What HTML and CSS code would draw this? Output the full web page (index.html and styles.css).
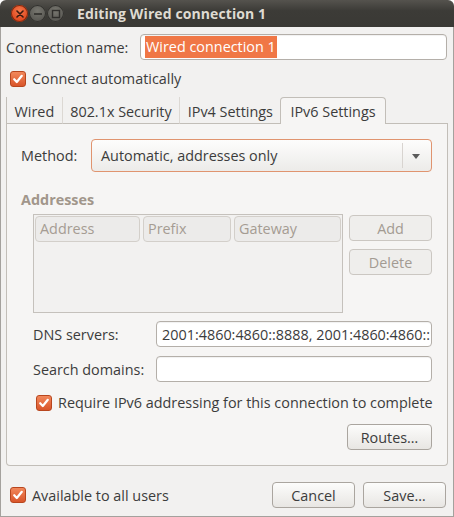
FILE: index.html
```html
<!DOCTYPE html>
<html>
<head>
<meta charset="utf-8">
<link rel="stylesheet" href="styles.css">
</head>
<body>
<div class="window">
  <div class="titlebar">
    <div class="wbtns">
      <span class="wbtn close"><svg width="8" height="8" viewBox="0 0 8 8"><path d="M1 1L7 7M7 1L1 7" stroke="#3a1a10" stroke-width="1.6" stroke-linecap="round"/></svg></span>
      <span class="wbtn"><svg width="10" height="10" viewBox="0 0 10 10"><path d="M1 5H9" stroke="#2f2e2b" stroke-width="1.6"/></svg></span>
      <span class="wbtn"><svg width="10" height="10" viewBox="0 0 10 10"><rect x="1.5" y="1.5" width="7" height="7" fill="none" stroke="#2f2e2b" stroke-width="1.4"/></svg></span>
    </div>
    <div class="title">Editing Wired connection 1</div>
  </div>
  <div class="body">
    <div class="name-row">
      <span class="label">Connection name:</span>
      <div class="entry name-entry"><span class="sel">Wired connection 1</span></div>
    </div>
    <div class="check-row top-check">
      <span class="check"><svg width="12" height="12" viewBox="0 0 12 12"><path d="M2.2 6.2L4.8 9L9.8 2.8" fill="none" stroke="#fff" stroke-width="2.2" stroke-linecap="round" stroke-linejoin="round"/></svg></span>
      <span>Connect automatically</span>
    </div>
    <div class="notebook">
      <div class="tabs">
        <div class="tab">Wired</div>
        <div class="tab">802.1x Security</div>
        <div class="tab">IPv4 Settings</div>
        <div class="tab active">IPv6 Settings</div>
        <div class="tab-fill"></div>
      </div>
      <div class="panel">
        <div class="method-row">
          <span class="label method-label">Method:</span>
          <div class="combo">
            <span class="combo-text">Automatic, addresses only</span>
            <span class="combo-sep"></span>
            <span class="combo-arrow"></span>
          </div>
        </div>
        <div class="section-title">Addresses</div>
        <div class="addr-block">
          <div class="table">
            <div class="thead">
              <div class="th th-addr">Address</div>
              <div class="th th-prefix">Prefix</div>
              <div class="th th-gw">Gateway</div>
            </div>
          </div>
          <div class="side-btns">
            <div class="btn insensitive">Add</div>
            <div class="btn insensitive">Delete</div>
          </div>
        </div>
        <div class="form-grid">
          <span class="label">DNS servers:</span>
          <div class="entry"><span class="entry-text">2001:4860:4860::8888, 2001:4860:4860::</span></div>
          <span class="label">Search domains:</span>
          <div class="entry"></div>
        </div>
        <div class="check-row require-check">
          <span class="check"><svg width="12" height="12" viewBox="0 0 12 12"><path d="M2.2 6.2L4.8 9L9.8 2.8" fill="none" stroke="#fff" stroke-width="2.2" stroke-linecap="round" stroke-linejoin="round"/></svg></span>
          <span>Require IPv6 addressing for this connection to complete</span>
        </div>
        <div class="routes-row">
          <div class="btn routes">Routes…</div>
        </div>
      </div>
    </div>
    <div class="footer">
      <div class="check-row">
        <span class="check"><svg width="12" height="12" viewBox="0 0 12 12"><path d="M2.2 6.2L4.8 9L9.8 2.8" fill="none" stroke="#fff" stroke-width="2.2" stroke-linecap="round" stroke-linejoin="round"/></svg></span>
        <span>Available to all users</span>
      </div>
      <div class="footer-btns">
        <div class="btn fbtn">Cancel</div>
        <div class="btn fbtn">Save…</div>
      </div>
    </div>
  </div>
</div>
</body>
</html>
```

FILE: styles.css
```css
* { box-sizing: border-box; }
html, body {
  margin: 0;
  padding: 0;
  background: #ffffff;
}
body {
  font-family: "Open Sans", "DejaVu Sans", sans-serif;
  font-size: 14.4px;
  color: #3c3c3c;
}
.window {
  width: 454px;
  height: 517px;
  display: flex;
  flex-direction: column;
}
.titlebar {
  height: 27px;
  flex: none;
  background: linear-gradient(#55534e, #3c3b37 40%, #3a3935);
  border-radius: 6px 6px 0 0;
  display: flex;
  align-items: center;
}
.wbtns {
  display: flex;
  margin-left: 11px;
  gap: 1px;
}
.wbtn {
  width: 17px;
  height: 17px;
  border-radius: 50%;
  background: radial-gradient(circle at 50% 35%, #77766f, #5a5954 70%);
  box-shadow: inset 0 0 0 1px #32312e;
  display: flex;
  align-items: center;
  justify-content: center;
}
.wbtn.close {
  background: radial-gradient(circle at 50% 35%, #f4784a, #e0481f 70%);
  box-shadow: inset 0 0 0 1px #7e2a10;
}
.title {
  margin-left: 13px;
  font-weight: bold;
  font-size: 14px;
  color: #dfdbd2;
  letter-spacing: 0.1px;
}
.body {
  flex: 1;
  background: #f2f1f0;
  border: 1px solid #a4a19d;
  border-top: none;
  padding: 7px 6px 0 5px;
  display: flex;
  flex-direction: column;
}
.label { white-space: nowrap; }
.name-row {
  display: flex;
  align-items: center;
  height: 26px;
}
.name-row .label { width: 134px; flex: none; }
.entry {
  height: 26px;
  background: #ffffff;
  border: 1px solid #b4afa9;
  border-radius: 4px;
  box-shadow: inset 0 1px 1px rgba(0,0,0,0.06);
  display: flex;
  align-items: center;
  padding: 0 4px;
  overflow: hidden;
  white-space: nowrap;
}
.name-entry { flex: 1; }
.sel {
  background: #f07746;
  color: #ffffff;
  padding: 1px 1px 2px;
}
.check-row {
  display: flex;
  align-items: center;
  gap: 6px;
  height: 21px;
  white-space: nowrap;
}
.check {
  width: 16px;
  height: 16px;
  flex: none;
  border-radius: 3px;
  background: linear-gradient(#f2885b, #d9552a);
  border: 1px solid #b8461e;
  display: flex;
  align-items: center;
  justify-content: center;
}
.top-check { margin: 8px 0 0 4px; }
.notebook {
  margin-top: 8px;
  margin-right: -1px;
  display: flex;
  flex-direction: column;
}
.tabs {
  display: flex;
  height: 27px;
  align-items: stretch;
}
.tab {
  padding: 5px 7.5px 0 7.5px;
  border-left: 1px solid #dcd8d3;
  border-bottom: 1px solid #c2beb8;
  white-space: nowrap;
}
.tab:first-child { border-left: 1px solid #c2beb8; }
.tab.active {
  background: #f6f5f4;
  border: 1px solid #c2beb8;
  border-bottom: none;
  border-radius: 4px 4px 0 0;
  padding: 4px 9px 0 9px;
}
.tab-fill {
  flex: 1;
  border-bottom: 1px solid #c2beb8;
}
.panel {
  background: #f6f5f4;
  border: 1px solid #c2beb8;
  border-top: none;
  border-radius: 0 0 4px 4px;
  padding: 15px 15px 15px 14px;
  display: flex;
  flex-direction: column;
}
.method-row {
  display: flex;
  align-items: center;
}
.method-label { width: 70px; flex: none; }
.combo {
  flex: 1;
  height: 33px;
  border: 1px solid #e0946f;
  border-radius: 4px;
  background: linear-gradient(#fdfdfc, #ecebe9);
  display: flex;
  align-items: center;
  padding-left: 9px;
}
.combo-text { flex: 1; }
.combo-sep {
  width: 1px;
  height: 25px;
  background: #d8d4d0;
}
.combo-arrow {
  width: 0;
  height: 0;
  border-left: 4px solid transparent;
  border-right: 4px solid transparent;
  border-top: 5px solid #5b5b5b;
  margin: 2px 11px 0 9px;
}
.section-title {
  margin-top: 18px;
  font-weight: bold;
  color: #a1968b;
  height: 19px;
  line-height: 19px;
}
.addr-block {
  display: flex;
  margin: 5px 0 0 12px;
  gap: 6px;
}
.table {
  width: 310px;
  height: 99px;
  border: 1px solid #c5c1bc;
  background: #f2f1f0;
  padding: 1px;
}
.thead {
  display: flex;
  gap: 3px;
  height: 26px;
}
.th {
  border: 1px solid #d3cfca;
  border-radius: 4px;
  background: #ecebea;
  color: #a59c93;
  padding: 2px 4px 0;
  white-space: nowrap;
}
.th-addr { width: 105px; }
.th-prefix { width: 88px; }
.th-gw { flex: 1; }
.side-btns {
  flex: 1;
  display: flex;
  flex-direction: column;
  gap: 8px;
  padding-top: 1px;
}
.btn {
  height: 26px;
  border: 1px solid #aaa59f;
  border-radius: 4px;
  background: linear-gradient(#fcfcfb, #e8e6e3);
  display: flex;
  align-items: center;
  justify-content: center;
  white-space: nowrap;
}
.btn.insensitive {
  border-color: #cbc7c2;
  background: #efeeec;
  color: #a39b92;
}
.form-grid {
  display: grid;
  grid-template-columns: 123px 1fr;
  row-gap: 9px;
  align-items: center;
  margin: 8px 0 0 12px;
}
.form-grid .entry { padding-left: 5px; color: #3c3c3c; }
.entry-text { white-space: nowrap; }
.require-check { margin: 10px 0 0 15px; }
.routes-row {
  display: flex;
  justify-content: flex-end;
  margin-top: 11px;
}
.routes { width: 85px; }
.footer {
  display: flex;
  align-items: center;
  justify-content: space-between;
  margin-top: 16px;
  padding-left: 4px;
}
.footer-btns {
  display: flex;
  gap: 8px;
  margin-right: 1px;
}
.fbtn { width: 83px; }
```
